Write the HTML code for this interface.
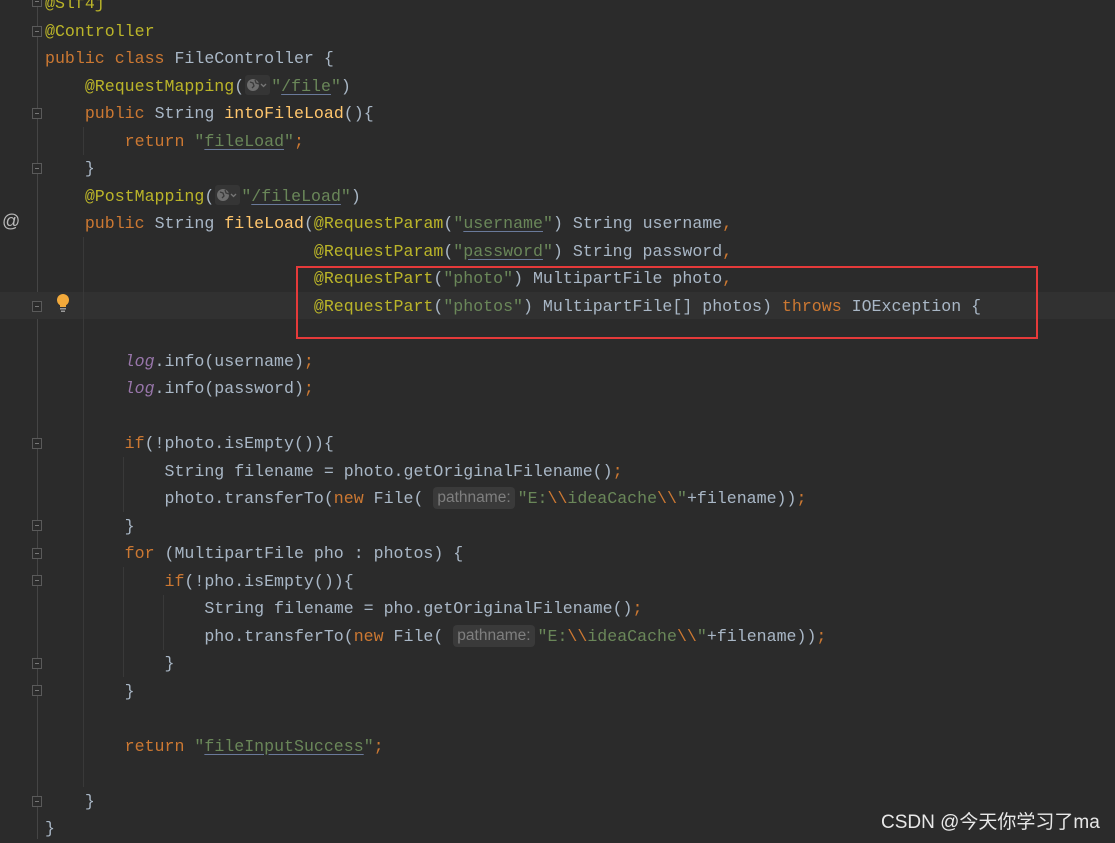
<!DOCTYPE html>
<html><head><meta charset="utf-8"><style>
body{margin:0;width:1115px;height:839px;background:#2b2b2b;overflow:hidden;position:relative;font-family:"Liberation Mono",monospace;}
.l{position:absolute;left:45px;height:27.5px;line-height:27.5px;font-size:16.6px;white-space:pre;color:#a9b7c6;margin-top:1px}
.k{color:#cc7832}.a{color:#bbb529}.s{color:#6a8759}.m{color:#ffc66d}.g{color:#9876aa;font-style:italic}
.u{text-decoration:underline;text-decoration-color:#6a7a9a;text-underline-offset:3px}
.h{display:inline-block;font-family:"Liberation Sans",sans-serif;font-size:15.5px;color:#7f7f7f;background:#3a3a3a;border-radius:4px;height:22px;line-height:22px;padding:0 4px;margin-right:3px;vertical-align:1px}
.gl{display:inline-block;width:25px;height:20px;background:#353535;border-radius:3px;vertical-align:-4px;margin:0 1px}
.f{position:absolute;left:32px;width:10px;height:11px;border:1px solid #5a5a5a;background:#2b2b2b;box-sizing:border-box}
.f:after{content:"";position:absolute;left:2px;right:2px;top:4px;height:1px;background:#777}
.v{position:absolute;width:1px;background:#393939}
</style></head><body>
<div style="position:absolute;left:37px;top:0;width:1px;height:839px;background:#454545"></div>
<div style="position:absolute;left:0;top:292px;width:1115px;height:27px;background:#313131"></div>
<div class="v" style="left:83px;top:127px;height:28px"></div>
<div class="v" style="left:83px;top:237px;height:550px"></div>
<div class="v" style="left:123px;top:457px;height:55px"></div>
<div class="v" style="left:123px;top:567px;height:110px"></div>
<div class="v" style="left:163px;top:595px;height:55px"></div>

<div class="f" style="top:-4px"></div>
<div class="f" style="top:26px"></div>
<div class="f" style="top:108px"></div>
<div class="f" style="top:163px"></div>
<div class="f" style="top:301px"></div>
<div class="f" style="top:438px"></div>
<div class="f" style="top:520px"></div>
<div class="f" style="top:548px"></div>
<div class="f" style="top:575px"></div>
<div class="f" style="top:658px"></div>
<div class="f" style="top:685px"></div>
<div class="f" style="top:796px"></div>

<div style="position:absolute;left:2px;top:211px;color:#bbb;font-size:18px;font-family:'Liberation Sans',sans-serif">@</div>
<svg style="position:absolute;left:55px;top:293px" width="16" height="20" viewBox="0 0 16 20"><circle cx="8" cy="7" r="6" fill="#f2a93b"/><rect x="5" y="12" width="6" height="2" fill="#f2a93b"/><rect x="5" y="15" width="6" height="1.5" fill="#999"/><rect x="6" y="17.5" width="4" height="1.5" fill="#999"/></svg>

<div style="position:absolute;left:296px;top:266px;width:738px;height:69px;border:2px solid #e53a3a"></div>

<div class="l" style="top:-10.75px"><span class="a">@Slf4j</span></div>
<div class="l" style="top:16.75px"><span class="a">@Controller</span></div>
<div class="l" style="top:44.25px"><span class="k">public class </span>FileController {</div>
<div class="l" style="top:71.75px">    <span class="a">@RequestMapping</span>(<span class="gl"><svg width="25" height="20" viewBox="0 0 25 20"><circle cx="8" cy="10" r="6" fill="#6e6e6e"/><path d="M5 7l3 1 1 3-2 2M10 5l1 3 3 1" stroke="#3a3a3a" stroke-width="1.3" fill="none"/><path d="M16 9l2.5 2.5 2.5-2.5" stroke="#777" stroke-width="1.3" fill="none"/></svg></span><span class="s">"<span class="u">/file</span>"</span>)</div>
<div class="l" style="top:99.25px">    <span class="k">public </span>String <span class="m">intoFileLoad</span>(){</div>
<div class="l" style="top:126.75px">        <span class="k">return </span><span class="s">"<span class="u">fileLoad</span>"</span><span class="k">;</span></div>
<div class="l" style="top:154.25px">    }</div>
<div class="l" style="top:181.75px">    <span class="a">@PostMapping</span>(<span class="gl"><svg width="25" height="20" viewBox="0 0 25 20"><circle cx="8" cy="10" r="6" fill="#6e6e6e"/><path d="M5 7l3 1 1 3-2 2M10 5l1 3 3 1" stroke="#3a3a3a" stroke-width="1.3" fill="none"/><path d="M16 9l2.5 2.5 2.5-2.5" stroke="#777" stroke-width="1.3" fill="none"/></svg></span><span class="s">"<span class="u">/fileLoad</span>"</span>)</div>
<div class="l" style="top:209.25px">    <span class="k">public </span>String <span class="m">fileLoad</span>(<span class="a">@RequestParam</span>(<span class="s">"<span class="u">username</span>"</span>) String username<span class="k">,</span></div>
<div class="l" style="top:236.75px">                           <span class="a">@RequestParam</span>(<span class="s">"<span class="u">password</span>"</span>) String password<span class="k">,</span></div>
<div class="l" style="top:264.25px">                           <span class="a">@RequestPart</span>(<span class="s">"photo"</span>) MultipartFile photo<span class="k">,</span></div>
<div class="l" style="top:291.75px">                           <span class="a">@RequestPart</span>(<span class="s">"photos"</span>) MultipartFile[] photos) <span class="k">throws </span>IOException {</div>
<div class="l" style="top:346.75px">        <span class="g">log</span>.info(username)<span class="k">;</span></div>
<div class="l" style="top:374.25px">        <span class="g">log</span>.info(password)<span class="k">;</span></div>
<div class="l" style="top:429.25px">        <span class="k">if</span>(!photo.isEmpty()){</div>
<div class="l" style="top:456.75px">            String filename = photo.getOriginalFilename()<span class="k">;</span></div>
<div class="l" style="top:484.25px">            photo.transferTo(<span class="k">new </span>File( <span class="h">pathname:</span><span class="s">"E:<span class="k">\\</span>ideaCache<span class="k">\\</span>"</span>+filename))<span class="k">;</span></div>
<div class="l" style="top:511.75px">        }</div>
<div class="l" style="top:539.25px">        <span class="k">for </span>(MultipartFile pho : photos) {</div>
<div class="l" style="top:566.75px">            <span class="k">if</span>(!pho.isEmpty()){</div>
<div class="l" style="top:594.25px">                String filename = pho.getOriginalFilename()<span class="k">;</span></div>
<div class="l" style="top:621.75px">                pho.transferTo(<span class="k">new </span>File( <span class="h">pathname:</span><span class="s">"E:<span class="k">\\</span>ideaCache<span class="k">\\</span>"</span>+filename))<span class="k">;</span></div>
<div class="l" style="top:649.25px">            }</div>
<div class="l" style="top:676.75px">        }</div>
<div class="l" style="top:731.75px">        <span class="k">return </span><span class="s">"<span class="u">fileInputSuccess</span>"</span><span class="k">;</span></div>
<div class="l" style="top:786.75px">    }</div>
<div class="l" style="top:814.25px">}</div>

<div style="position:absolute;left:881px;top:807px;color:#e8e8e8;font-size:19px;font-family:'Liberation Sans','Noto Sans CJK SC',sans-serif">CSDN @今天你学习了ma</div>
</body></html>
